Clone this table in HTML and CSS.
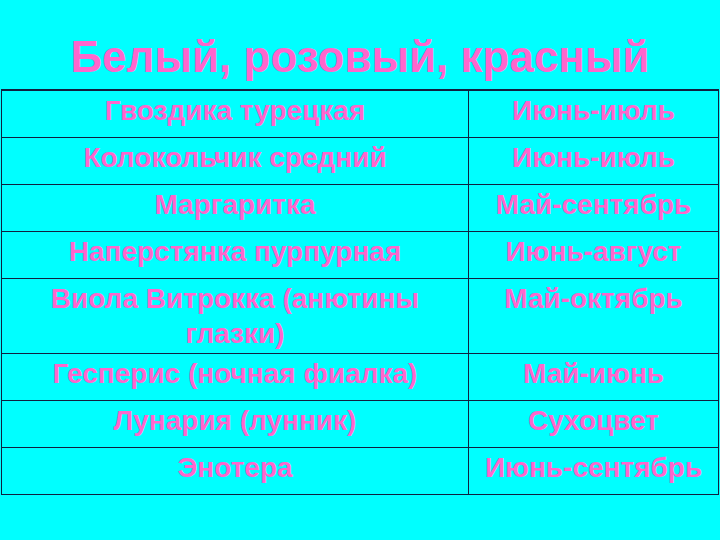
FILE: index.html
```html
<!DOCTYPE html>
<html lang="ru">
<head>
<meta charset="utf-8">
<title>Белый, розовый, красный</title>
<link rel="stylesheet" href="styles.css">
</head>
<body>
<h1 class="title">Белый, розовый, красный</h1>
<table class="flowers">
  <tr><td class="name">Гвоздика турецкая</td><td class="period">Июнь-июль</td></tr>
  <tr><td class="name">Колокольчик средний</td><td class="period">Июнь-июль</td></tr>
  <tr><td class="name">Маргаритка</td><td class="period">Май-сентябрь</td></tr>
  <tr><td class="name">Наперстянка пурпурная</td><td class="period">Июнь-август</td></tr>
  <tr><td class="name">Виола Витрокка (анютины глазки)</td><td class="period">Май-октябрь</td></tr>
  <tr><td class="name">Гесперис (ночная фиалка)</td><td class="period">Май-июнь</td></tr>
  <tr><td class="name">Лунария (лунник)</td><td class="period">Сухоцвет</td></tr>
  <tr><td class="name">Энотера</td><td class="period">Июнь-сентябрь</td></tr>
</table>
</body>
</html>
```

FILE: styles.css
```css
html, body {
  margin: 0;
  padding: 0;
  background: #00ffff;
  width: 720px;
  height: 540px;
  overflow: hidden;
}

body {
  font-family: "Liberation Sans", Arial, sans-serif;
  color: #ff66cc;
}

.title {
  margin: 0;
  height: 89px;
  box-sizing: border-box;
  padding-top: 32px;
  font-size: 44px;
  line-height: 50px;
  font-weight: bold;
  text-align: center;
}

.flowers {
  border-collapse: collapse;
  margin-left: 1px;
  width: 718px;
  border-top: 2px solid #102040;
}

.flowers tr {
  height: 47px;
}

.flowers td {
  border: 1px solid #102040;
  font-size: 28px;
  line-height: 35px;
  font-weight: bold;
  text-align: center;
  vertical-align: top;
  padding: 2px 10px 2px;
}

.flowers .name {
  width: 446px;
}
```
